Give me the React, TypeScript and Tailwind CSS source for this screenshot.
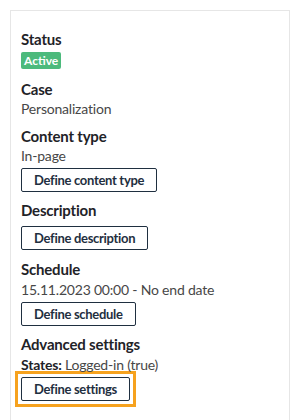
import React from "react";

function DefineButton({ label }: { label: string }) {
  return (
    <button className="block h-6 px-[12px] border border-[#1f2f40] rounded-[2px] bg-white text-[13px] font-bold tracking-[-0.3px] text-[#1f2f40] leading-none">
      {label}
    </button>
  );
}

function Heading({ children, className = "" }: { children: React.ReactNode; className?: string }) {
  return (
    <div className={`text-[15px] leading-5 font-bold tracking-[-0.2px] text-[#1f2328] ${className}`}>
      {children}
    </div>
  );
}

function Value({ children, className = "" }: { children: React.ReactNode; className?: string }) {
  return (
    <div className={`text-[14px] leading-5 tracking-[-0.2px] text-[#474747] ${className}`}>{children}</div>
  );
}

export default function App() {
  return (
    <div className="w-[300px] h-[420px] bg-white overflow-hidden pt-[10px] px-[10px] font-['Lato',_sans-serif]">
      <div className="h-[430px] border border-[#e6e6e6] pl-[10px] pt-[18px]">
        {/* Status */}
        <Heading>Status</Heading>
        <div className="mt-[3px] flex w-fit h-[17px] items-center px-[3px] rounded-[2px] bg-[#4cba7c] text-white text-[12px] font-bold">
          Active
        </div>

        <Heading className="mt-[10px]">Case</Heading>
        <Value>Personalization</Value>

        <Heading className="mt-[7px]">Content type</Heading>
        <Value>In-page</Value>
        <div className="mt-[2px]">
          <DefineButton label="Define content type" />
        </div>

        <Heading className="mt-[8px]">Description</Heading>
        <div className="mt-[6px]">
          <DefineButton label="Define description" />
        </div>

        <Heading className="mt-[9px]">Schedule</Heading>
        <Value className="mt-[1px]">15.11.2023 00:00 - No end date</Value>
        <div className="mt-[2px]">
          <DefineButton label="Define schedule" />
        </div>

        <Heading className="mt-[8px]">Advanced settings</Heading>
        <Value className="mt-[1px]">
          <span className="font-bold text-[#1f2328]">States:</span> Logged-in (true)
        </Value>
        {/* focus ring on the active button */}
        <div className="mt-[-4px] -ml-[6px] w-fit border-[3px] border-[#f6a21e] p-[3px]">
          <DefineButton label="Define settings" />
        </div>
      </div>
    </div>
  );
}
